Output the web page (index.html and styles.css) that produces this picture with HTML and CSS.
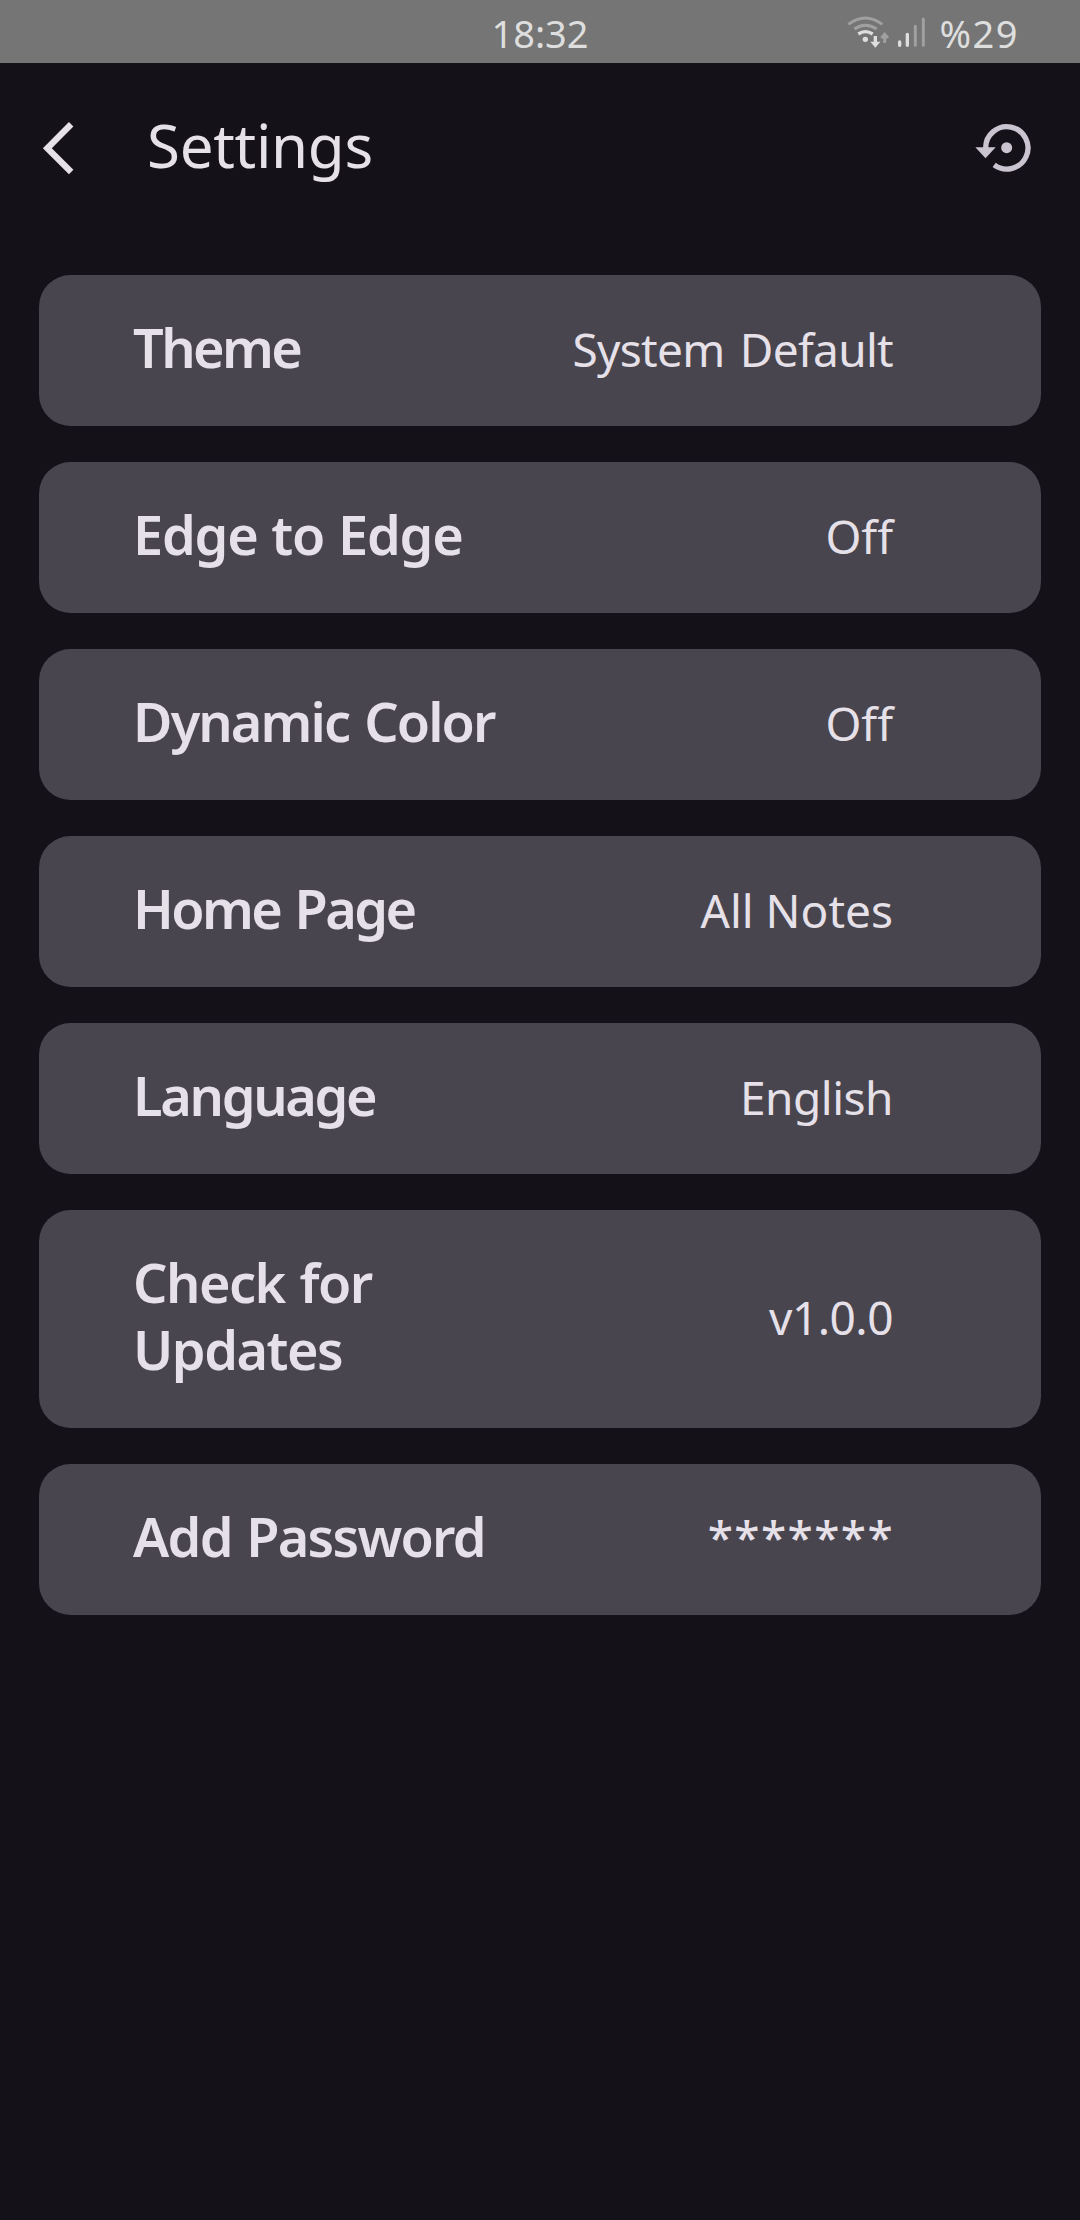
FILE: index.html
```
<!DOCTYPE html>
<html lang="en">
<head>
<meta charset="utf-8">
<title>Settings</title>
<link rel="stylesheet" href="styles.css">
</head>
<body>
<div class="status-bar">
  <span class="clock">18:32</span>
  <div class="status-right">
    <svg class="signals" viewBox="0 0 294 135" fill="none" stroke-linecap="round">
      <g stroke="#a0a0a0" stroke-width="9">
        <path d="M22 43Q73 5 124 43M40 57Q73 34 107 57" stroke-linecap="butt"/>
        <path d="M131 99V74M121 84L131 73L141 84" stroke-linecap="butt"/>
        <path d="M223 49V106M247 27V106"/>
      </g>
      <g stroke="#dedede" stroke-width="10">
        <path d="M52 72Q73 58 95 72" stroke-linecap="butt"/>
        <path d="M103 78V102" stroke-linecap="butt"/>
        <path d="M176 96V106M199 73V106"/>
      </g>
      <circle cx="73" cy="88" r="8" fill="#dedede"/>
      <path d="M88 95H118L103 113Z" fill="#dedede"/>
    </svg>
    <span class="battery">%29</span>
  </div>
</div>
<header class="app-bar">
  <svg class="back" viewBox="117 76 114 192" fill="none" stroke="#e6e1e9" stroke-width="19"><path d="M213.500 101L142 172.500L213.500 244"/></svg>
  <h1 class="title">Settings</h1>
  <svg class="restore" viewBox="90 92 192 160"><path d="M137 174A63.500 63.500 0 1 1 162.500 223.500" fill="none" stroke="#cac4d0" stroke-width="16"/><path d="M106 171H167L136.500 204Z" fill="#cac4d0"/><circle cx="200" cy="172" r="16.500" fill="#cac4d0"/></svg>
</header>
<main class="list">
  <div class="card"><span class="label theme">Theme</span><span class="value system">System Default</span></div>
  <div class="card"><span class="label edge">Edge to Edge</span><span class="value">Off</span></div>
  <div class="card"><span class="label dynamic">Dynamic Color</span><span class="value">Off</span></div>
  <div class="card"><span class="label home">Home Page</span><span class="value">All Notes</span></div>
  <div class="card"><span class="label language">Language</span><span class="value english">English</span></div>
  <div class="card"><span class="label updates">Check for<br>Updates</span><span class="value version">v1.0.0</span></div>
  <div class="card"><span class="label password">Add Password</span><span class="value stars">*******</span></div>
</main>
</body>
</html>
```
FILE: styles.css
```
* { box-sizing: border-box; }
body {
  margin: 0;
  min-height: 2220px;
  background: #141118;
  color: #e6e1e9;
  font-family: "Noto Sans", sans-serif;
  font-variant-ligatures: none;
}
.status-bar {
  height: 63px;
  display: grid;
  grid-template-columns: 1fr auto 1fr;
  align-items: center;
  background: #757575;
  color: #dedede;
  font-size: 38px;
  line-height: 61px;
}
.clock { grid-column: 2; padding-top: 2px; }
.status-right {
  display: flex;
  align-items: center;
  justify-content: flex-end;
  padding-right: 61px;
}
.signals { width: 98px; height: 45px; margin-top: 1px; }
.battery { letter-spacing: 1.5px; padding-top: 3px; }
.app-bar {
  height: 169px;
  display: flex;
  align-items: center;
  padding: 0 46px 0 39px;
}
.back { width: 38px; height: 64px; }
.title {
  flex: 1;
  margin: 0 0 0 70px;
  padding-bottom: 5px;
  font-size: 60px;
  font-weight: 420;
  line-height: 80px;
  letter-spacing: -0.3px;
}
.restore { width: 64px; height: 53.3px; }
.list {
  display: flex;
  flex-direction: column;
  gap: 36px;
  padding: 43px 39px 0;
}
.card {
  display: flex;
  justify-content: space-between;
  align-items: center;
  padding: 39px 148px 45px 94px;
  border-radius: 31.5px;
  background: #49454e;
}
.label { font-size: 54px; font-weight: 560; line-height: 67px; }
.value { font-size: 46px; font-weight: 430; line-height: 60px; padding-top: 2px; }
.theme { letter-spacing: -2.6px; }
.edge { letter-spacing: -1.2px; word-spacing: 1px; }
.dynamic { letter-spacing: -1.9px; word-spacing: 3px; }
.home { letter-spacing: -2.6px; word-spacing: 3px; }
.language { letter-spacing: -2.3px; }
.updates { letter-spacing: -1.5px; word-spacing: 2px; }
.password { letter-spacing: -1.7px; word-spacing: 2px; }
.system { letter-spacing: -0.7px; word-spacing: 4px; }
.english { letter-spacing: -0.5px; }
.version { letter-spacing: -0.5px; }
.stars { letter-spacing: 1.4px; font-weight: 500; padding-bottom: 4px; margin-right: -1px; }
```
